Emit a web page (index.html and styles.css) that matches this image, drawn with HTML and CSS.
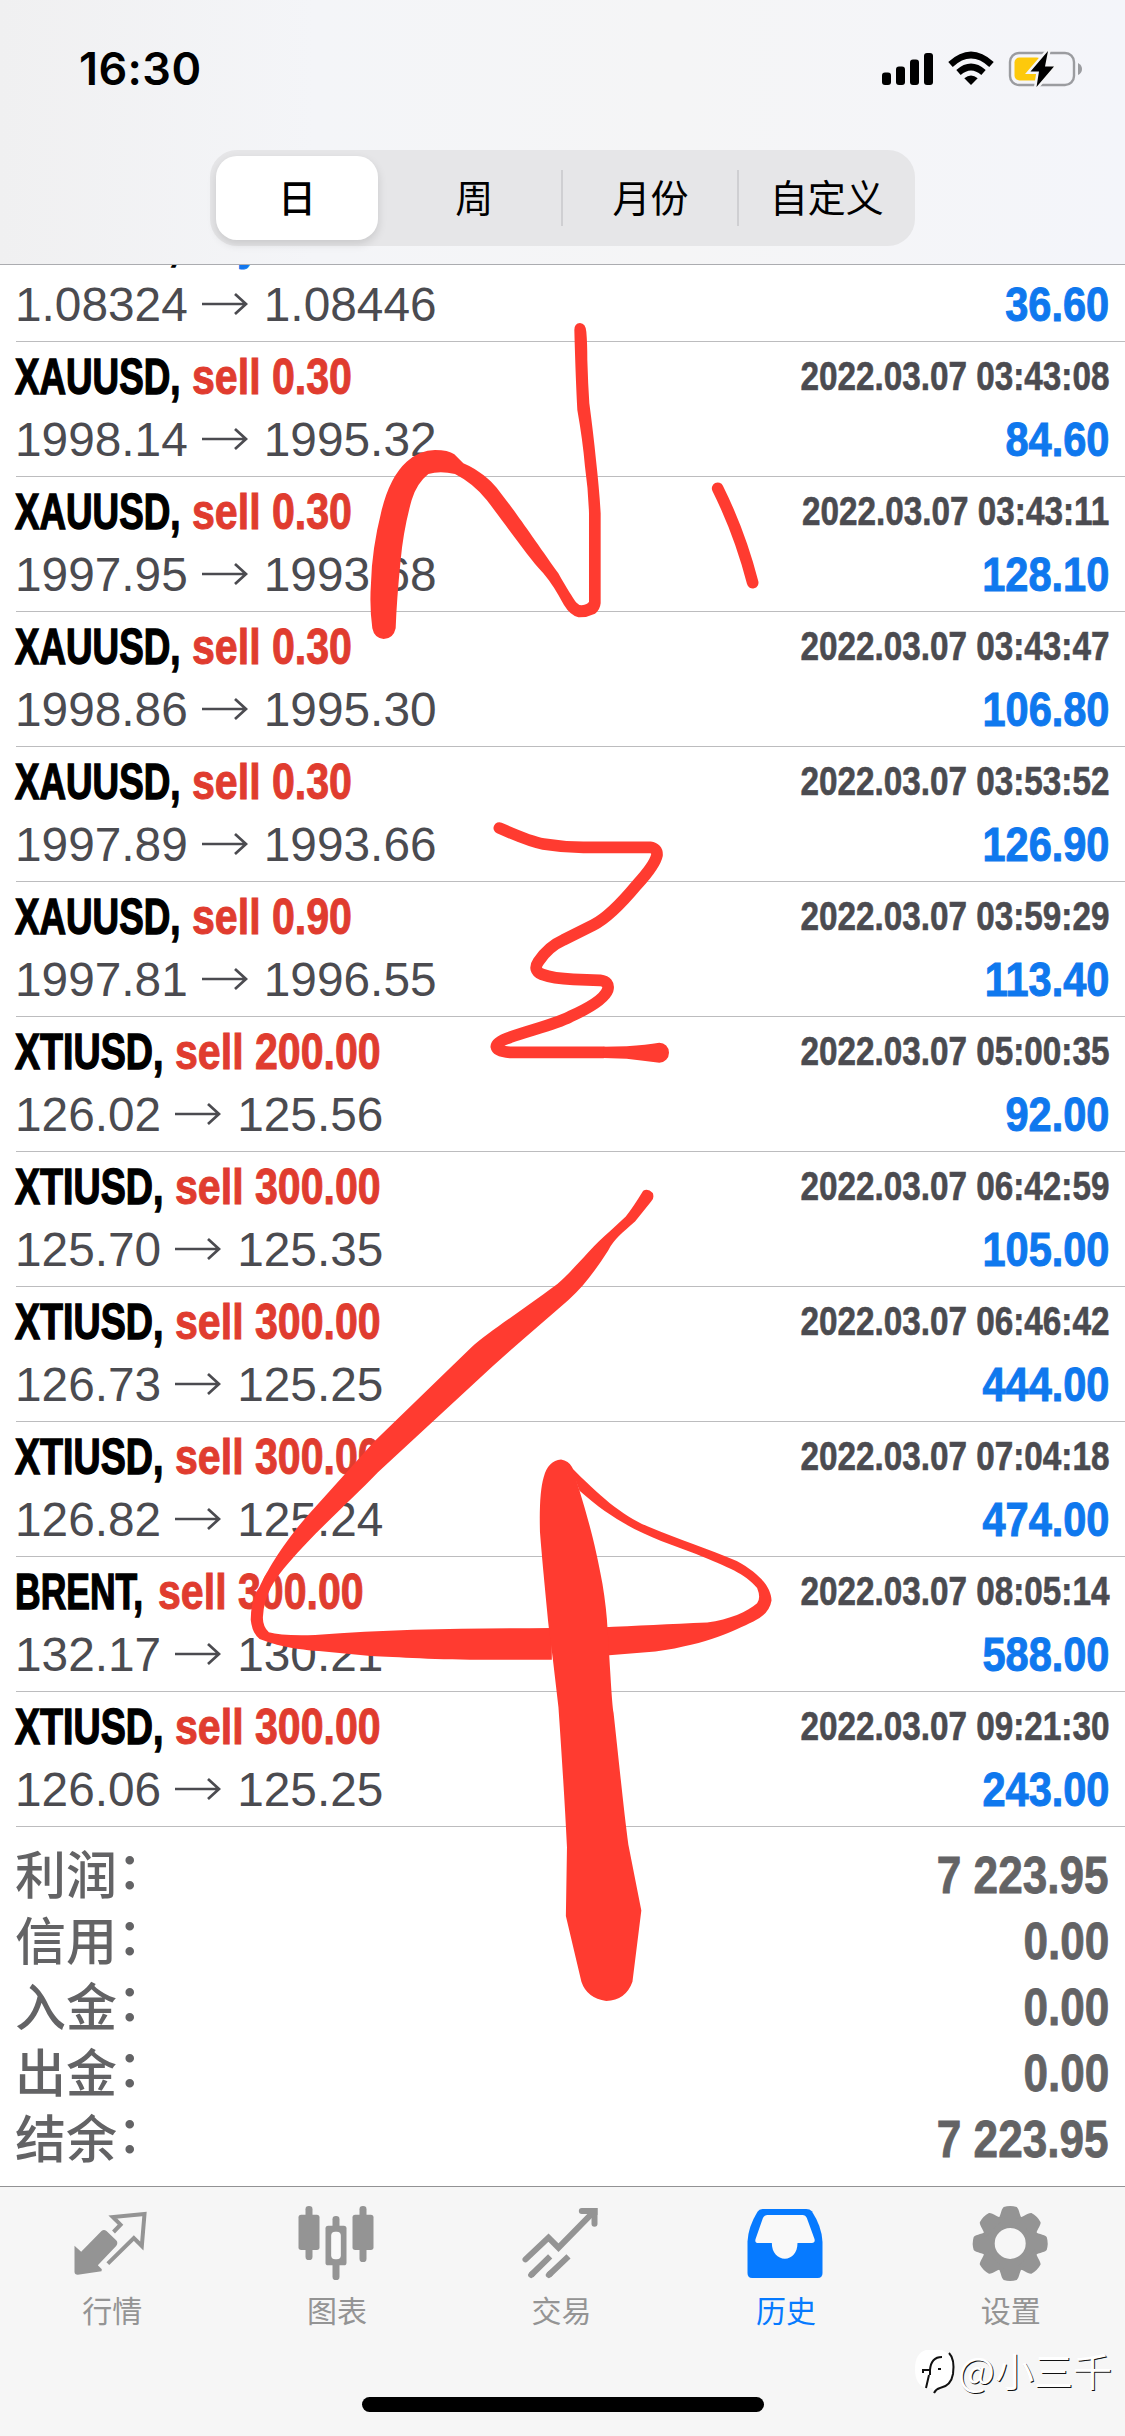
FILE: index.html
```html
<!DOCTYPE html>
<html lang="zh-CN">
<head>
<meta charset="utf-8">
<title>历史</title>
<link rel="stylesheet" href="styles.css">
</head>
<body>
<div class="screen">
  <header class="header">
    <div class="status">
      <span class="clock">16:30</span>
      <svg class="status-icons" width="204" height="40" viewBox="880 49 204 40">
        <rect x="882" y="72.5" width="9" height="12.5" rx="3"/>
        <rect x="896" y="66.5" width="9" height="18.5" rx="3"/>
        <rect x="910" y="59.5" width="9" height="25.5" rx="3"/>
        <rect x="924" y="53" width="9" height="32" rx="3"/>
        <g fill="none" stroke="#000" stroke-width="6.6">
          <path d="M950.5 64.5Q971 45.500 991.500 64.500"/>
          <path d="M958.500 72.500Q971 61.500 983.500 72.500"/>
        </g>
        <path d="M971 85L964.300 78.300Q971 72.500 977.700 78.300Z"/>
        <rect x="1010" y="53" width="64" height="32" rx="9" fill="none" stroke="#9b9ca0" stroke-width="2.400"/>
        <path d="M1078 63Q1082 65 1082 69T1078 75Z" fill="#9b9ca0"/>
        <rect x="1014.500" y="57.500" width="27" height="23" rx="5" fill="#fdc90c"/>
        <path d="M1048 51L1030.500 71.500H1039L1036.500 87L1054 66.500H1045Z" stroke="#f5f5f7" stroke-width="5"/>
        <path d="M1048 51L1030.500 71.500H1039L1036.500 87L1054 66.500H1045Z"/>
      </svg>
    </div>
    <nav class="segments">
      <span class="segment selected">日</span>
      <span class="segment">周</span>
      <span class="segment divided">月份</span>
      <span class="segment divided">自定义</span>
    </nav>
  </header>

  <main class="history">
    <div class="row">
      <div class="title"><span class="symbol eur">EURUSD,</span><span class="deal buy">buy 0.30</span></div>
      <div class="date"></div>
      <div class="prices">1.08324<svg class="arrow" viewBox="0 0 46 24"><path d="M0 12H44M33 2L44 12L33 22"/></svg>1.08446</div>
      <div class="profit">36.60</div>
    </div>
    <div class="row">
      <div class="title"><span class="symbol xau">XAUUSD,</span><span class="deal">sell 0.30</span></div>
      <div class="date">2022.03.07 03:43:08</div>
      <div class="prices">1998.14<svg class="arrow" viewBox="0 0 46 24"><path d="M0 12H44M33 2L44 12L33 22"/></svg>1995.32</div>
      <div class="profit">84.60</div>
    </div>
    <div class="row">
      <div class="title"><span class="symbol xau">XAUUSD,</span><span class="deal">sell 0.30</span></div>
      <div class="date">2022.03.07 03:43:11</div>
      <div class="prices">1997.95<svg class="arrow" viewBox="0 0 46 24"><path d="M0 12H44M33 2L44 12L33 22"/></svg>1993.68</div>
      <div class="profit">128.10</div>
    </div>
    <div class="row">
      <div class="title"><span class="symbol xau">XAUUSD,</span><span class="deal">sell 0.30</span></div>
      <div class="date">2022.03.07 03:43:47</div>
      <div class="prices">1998.86<svg class="arrow" viewBox="0 0 46 24"><path d="M0 12H44M33 2L44 12L33 22"/></svg>1995.30</div>
      <div class="profit">106.80</div>
    </div>
    <div class="row">
      <div class="title"><span class="symbol xau">XAUUSD,</span><span class="deal">sell 0.30</span></div>
      <div class="date">2022.03.07 03:53:52</div>
      <div class="prices">1997.89<svg class="arrow" viewBox="0 0 46 24"><path d="M0 12H44M33 2L44 12L33 22"/></svg>1993.66</div>
      <div class="profit">126.90</div>
    </div>
    <div class="row">
      <div class="title"><span class="symbol xau">XAUUSD,</span><span class="deal">sell 0.90</span></div>
      <div class="date">2022.03.07 03:59:29</div>
      <div class="prices">1997.81<svg class="arrow" viewBox="0 0 46 24"><path d="M0 12H44M33 2L44 12L33 22"/></svg>1996.55</div>
      <div class="profit">113.40</div>
    </div>
    <div class="row">
      <div class="title"><span class="symbol xti">XTIUSD,</span><span class="deal">sell 200.00</span></div>
      <div class="date">2022.03.07 05:00:35</div>
      <div class="prices">126.02<svg class="arrow" viewBox="0 0 46 24"><path d="M0 12H44M33 2L44 12L33 22"/></svg>125.56</div>
      <div class="profit">92.00</div>
    </div>
    <div class="row">
      <div class="title"><span class="symbol xti">XTIUSD,</span><span class="deal">sell 300.00</span></div>
      <div class="date">2022.03.07 06:42:59</div>
      <div class="prices">125.70<svg class="arrow" viewBox="0 0 46 24"><path d="M0 12H44M33 2L44 12L33 22"/></svg>125.35</div>
      <div class="profit">105.00</div>
    </div>
    <div class="row">
      <div class="title"><span class="symbol xti">XTIUSD,</span><span class="deal">sell 300.00</span></div>
      <div class="date">2022.03.07 06:46:42</div>
      <div class="prices">126.73<svg class="arrow" viewBox="0 0 46 24"><path d="M0 12H44M33 2L44 12L33 22"/></svg>125.25</div>
      <div class="profit">444.00</div>
    </div>
    <div class="row">
      <div class="title"><span class="symbol xti">XTIUSD,</span><span class="deal">sell 300.00</span></div>
      <div class="date">2022.03.07 07:04:18</div>
      <div class="prices">126.82<svg class="arrow" viewBox="0 0 46 24"><path d="M0 12H44M33 2L44 12L33 22"/></svg>125.24</div>
      <div class="profit">474.00</div>
    </div>
    <div class="row">
      <div class="title"><span class="symbol brent">BRENT,</span><span class="deal">sell 300.00</span></div>
      <div class="date">2022.03.07 08:05:14</div>
      <div class="prices">132.17<svg class="arrow" viewBox="0 0 46 24"><path d="M0 12H44M33 2L44 12L33 22"/></svg>130.21</div>
      <div class="profit">588.00</div>
    </div>
    <div class="row">
      <div class="title"><span class="symbol xti">XTIUSD,</span><span class="deal">sell 300.00</span></div>
      <div class="date">2022.03.07 09:21:30</div>
      <div class="prices">126.06<svg class="arrow" viewBox="0 0 46 24"><path d="M0 12H44M33 2L44 12L33 22"/></svg>125.25</div>
      <div class="profit">243.00</div>
    </div>

    <section class="summary">
      <div class="total"><span class="label">利润<span class="colon">：</span></span><span class="value">7 223.95</span></div>
      <div class="total"><span class="label">信用<span class="colon">：</span></span><span class="value">0.00</span></div>
      <div class="total"><span class="label">入金<span class="colon">：</span></span><span class="value">0.00</span></div>
      <div class="total"><span class="label">出金<span class="colon">：</span></span><span class="value">0.00</span></div>
      <div class="total"><span class="label">结余<span class="colon">：</span></span><span class="value">7 223.95</span></div>
    </section>
  </main>

  <footer class="footer">
    <nav class="tabs">
      <div class="tab">
        <svg width="80" height="80" viewBox="37.5 24 240 240">
          <path fill="currentColor" d="M45 152L65 170L126 108Q133 102 141 108L170 136Q177 144 170 153L115 211L127 223L126 229L55 239Q45 239 45 230Z"/>
          <path fill="none" stroke="currentColor" stroke-width="12" d="M162 111L183 89L160 66L255 57L247 153L223 129L145 206"/>
        </svg>
        <span>行情</span>
      </div>
      <div class="tab">
        <svg width="80" height="80" viewBox="712.5 24 240 240" fill="currentColor">
          <rect x="717" y="59" width="63" height="106" rx="8"/><rect x="738" y="33" width="21" height="162" rx="10"/>
          <rect x="879" y="59" width="63" height="106" rx="8"/><rect x="900" y="33" width="21" height="168" rx="10"/>
          <rect x="798" y="92" width="63" height="119" rx="8"/><rect x="819" y="63" width="21" height="192" rx="10"/>
          <rect x="815" y="110" width="29" height="83" rx="12" fill="#f9f9f9"/>
        </svg>
        <span>图表</span>
      </div>
      <div class="tab">
        <svg width="80" height="80" viewBox="37.5 24 240 240" fill="none" stroke="currentColor" stroke-width="18">
          <path stroke-linecap="round" d="M51 193L120 128L150 158L256 50"/>
          <path stroke-linecap="round" d="M220 48H258V86"/>
          <path d="M245 39H267V60H245Z" stroke="none" fill="currentColor"/>
          <path d="M68 240L125 184M121 240L180 184"/>
          <path stroke-linecap="round" d="M68 240L71 237M121 240L124 237"/>
        </svg>
        <span>交易</span>
      </div>
      <div class="tab active">
        <svg width="80" height="80" viewBox="712.5 24 240 240">
          <path fill="currentColor" d="M762 42H893Q904 42 910 49Q940 95 942 140V234Q942 249 928 249H731Q717 249 717 234V140Q719 95 747 50Q752 42 762 42Z"/>
          <path fill="#f9f9f9" d="M777 60H882Q891 60 895 69L918 132Q921 144 910 144H867C867 174 850 191 829 191S790 174 790 144H750Q738 144 741 133L763 70Q768 60 777 60Z"/>
        </svg>
        <span>历史</span>
      </div>
      <div class="tab">
        <svg width="80" height="80" viewBox="-39.200 -40.400 80 80" fill="currentColor">
          <defs><path id="tooth" d="M-13.500 -22C-9 -27 -9.500 -34 -6.500 -36.500Q0 -38.500 6.500 -36.500C9.500 -34 9 -27 13.500 -22Z"/></defs>
          <path fill-rule="evenodd" d="M0 -28.500A28.500 28.500 0 1 1 0 28.500A28.500 28.500 0 1 1 0 -28.500ZM0 -15.500A15.500 15.500 0 1 0 0 15.500A15.500 15.500 0 1 0 0 -15.500Z"/>
          <use href="#tooth"/><use href="#tooth" transform="rotate(45)"/><use href="#tooth" transform="rotate(90)"/><use href="#tooth" transform="rotate(135)"/>
          <use href="#tooth" transform="rotate(180)"/><use href="#tooth" transform="rotate(225)"/><use href="#tooth" transform="rotate(270)"/><use href="#tooth" transform="rotate(315)"/>
        </svg>
        <span>设置</span>
      </div>
    </nav>
    <div class="home-indicator"></div>
  </footer>

  <div class="watermark">
    <svg width="44" height="46" viewBox="0 0 44 46">
      <path fill="#fff" d="M12 1H28Q40 6 40 20T28 39L20 44L18 39H12Q1 36 1 20T12 1Z"/>
      <path fill="none" stroke="#111" stroke-width="2" d="M35 4Q41 10 39 25Q37 37 26 39Q22 40 20 44M28 8Q17 8 16 21H9V24M16 21V26M15 26L12 39M24 20H27"/>
    </svg><span>@小三千</span>
  </div>

  <!-- freehand marker strokes -->
  <svg class="ink" viewBox="0 0 1125 2436">
    <g transform="translate(340 300) scale(.33333)">
      <path d="M97 985Q88 920 93 850Q95 750 125 630Q150 530 200 485Q240 450 285 450Q325 450 343 463Q355 475 370 490C420 512 450 540 470 563C530 640 570 700 655 820C680 865 700 895 708 907Q716 916 725 916Q743 913 747 905V640Q745 570 735 500Q728 420 712 330Q707 240 703 90Q703 70 720 69Q737 70 739 95Q742 130 742 180Q744 250 748 310Q760 400 768 480Q778 570 782 640V910Q780 930 765 941Q740 953 715 952Q690 945 672 915C650 875 635 850 610 820C560 765 520 705 440 600Q400 550 345 522Q300 512 265 522Q230 550 215 600Q190 690 182 780Q170 900 167 985Q160 1017 131 1017Q103 1015 97 985Z"/>
      <path class="line" d="M1133 565Q1200 700 1238 848"/>
    </g>
    <g transform="translate(460 790) scale(.33333)">
      <path class="line" d="M118 114Q210 155 250 162Q310 172 370 172H570Q592 175 591 195Q585 225 530 285C480 345 440 385 400 405L310 450Q265 470 235 515Q218 540 245 553Q280 566 340 568L420 571Q450 575 443 600Q430 635 330 680C280 705 210 720 150 742Q110 755 109 770Q112 785 150 787H430"/>
      <path d="M430 770L500 769Q560 764 598 758A29 30 0 0 1 598 818Q550 812 500 806L430 804Z"/>
    </g>
    <g transform="translate(230 1170) scale(.3699 .54848)">
      <path d="M1117 38Q1130 33 1143 42Q1148 52 1138 58L1095 94C1060 115 1040 125 1022 147C990 180 960 210 915 237C850 275 780 315 710 358L400 551C330 600 230 660 160 715C120 745 92 775 89 815Q88 832 105 843Q140 850 230 848C450 836 650 836 870 835V893H700C560 893 450 888 380 886L240 877C160 873 120 865 80 855Q60 845 56 820Q57 780 80 760C100 730 150 675 210 630L390 495L650 325C700 295 760 270 885 208C940 175 970 145 1030 110L1070 85Q1090 68 1117 38Z"/>
      <path d="M920 540C1000 595 1060 630 1130 650C1220 675 1290 690 1370 713C1430 735 1463 760 1464 785Q1458 810 1415 823C1360 840 1300 863 1150 878L1000 886V834C1100 831 1190 828 1290 825C1350 820 1400 805 1425 790Q1436 780 1425 762C1390 735 1350 725 1260 700C1160 675 1060 655 945 585Z"/>
      <path d="M848 560Q860 530 895 528Q915 530 925 542L945 585C970 640 990 690 1007 755Q1018 800 1021 840C1028 910 1032 970 1037 990C1050 1070 1065 1170 1077 1230L1112 1350L1088 1480Q1070 1514 1017 1515Q965 1510 950 1480L908 1360L911 1235C905 1150 895 1050 888 980L873 893L862 835C850 750 845 720 838 660Q835 590 848 560Z"/>
    </g>
  </svg>
</div>
</body>
</html>
```
FILE: styles.css
```css
* { box-sizing: border-box; }
body { margin: 0; background: #fff; }

.screen {
  position: relative;
  display: flex;
  flex-direction: column;
  width: 1125px;
  height: 2436px;
  overflow: hidden;
  background: #fff;
  font-family: "Liberation Sans", "Noto Sans CJK SC", sans-serif;
}

.header {
  height: 265px;
  flex: none;
  border-bottom: 1px solid #abacb0;
  background: linear-gradient(90deg, #f0f0f1, #f4f5f8 28%, #f5f5f6 60%, #f4f5fa);
}
.status {
  display: flex;
  justify-content: space-between;
  align-items: center;
  height: 150px;
  padding: 0 41px 12px 79px;
}
.clock {
  font: 600 45px/60px Inter, sans-serif;
  letter-spacing: .4px;
}

.segments {
  display: grid;
  grid-template-columns: repeat(4, 1fr);
  width: 705px;
  height: 96px;
  margin-left: 210px;
  border-radius: 27px;
  background: #e6e6e8;
}
.segment {
  display: flex;
  justify-content: center;
  align-items: center;
  padding-bottom: 4px;
  font: 400 38px/52px "Noto Sans CJK SC", sans-serif;
}
.segment.selected {
  margin: 6px 8px 6px 6px;
  border-radius: 21px;
  background: #fff;
  font-weight: 500;
  box-shadow: 0 4px 10px rgba(0, 0, 0, .13);
}
.segment.divided {
  height: 56px;
  margin: 20px 0 0 -2px;
  border-left: 2px solid #cfcfd2;
}

.history {
  flex: 1;
  min-height: 0;
  overflow: hidden;
}
.row {
  display: grid;
  grid-template: 62px 65px / 1fr auto;
  height: 135px;
  margin-left: 16px;
  padding: 3px 16px 0 0;
  border-bottom: 1px solid #bcbcbe;
}
.row:first-child { margin-top: -58px; }

.title {
  display: flex;
  padding-top: 1px;
  font-size: 50px;
  font-weight: 700;
  line-height: 62px;
  white-space: nowrap;
}
.symbol, .deal { transform-origin: left; }
.symbol { margin-left: -1px; -webkit-text-stroke: 1.4px; }
.symbol.xau { width: 177px; transform: scaleX(.735); }
.symbol.eur { width: 172px; transform: scaleX(.73); }
.symbol.xti { width: 160px; transform: scaleX(.752); }
.symbol.brent { width: 143px; transform: scaleX(.71); }
.deal { color: #e03c2f; transform: scaleX(.822); -webkit-text-stroke: 1px; }
.deal.buy { color: #1277ee; }

.date, .profit, .value {
  font-weight: 700;
  text-align: right;
  transform-origin: right;
}
.date {
  padding-top: 1px;
  color: #4b4b50;
  font-size: 40px;
  line-height: 60px;
  transform: scaleX(.832);
  -webkit-text-stroke: .6px;
}
.prices {
  margin-left: -1px;
  color: #4b4b50;
  font-size: 47.8px;
  line-height: 65px;
  white-space: nowrap;
}
.arrow {
  width: 46px;
  height: 24px;
  margin: 0 16px 0 14px;
  vertical-align: 5px;
  fill: none;
  stroke: currentColor;
  stroke-width: 2.7;
}
.profit {
  color: #0f78ee;
  font-size: 48px;
  line-height: 65px;
  transform: scaleX(.865);
  -webkit-text-stroke: 1px;
}

.summary { padding: 15px 16px 0 15px; }
.total {
  display: flex;
  justify-content: space-between;
  height: 66px;
  color: #636365;
  line-height: 66px;
}
.label { font: 500 51px/60px "Noto Sans CJK SC", sans-serif; }
.colon { display: inline-block; transform: translateY(-5px); }
.value { font-size: 51px; line-height: 68px; transform: scaleX(.865); -webkit-text-stroke: .8px; }

.footer {
  height: 250px;
  flex: none;
  border-top: 1px solid #929294;
  background: #f6f6f6;
}
.tabs {
  display: grid;
  grid-template-columns: repeat(5, 1fr);
  height: 210px;
  padding: 16px 2px 0 0;
}
.tab {
  display: flex;
  flex-direction: column;
  align-items: center;
  color: #949494;
  font: 400 30px/44px "Noto Sans CJK SC", sans-serif;
}
.tab svg { margin-bottom: 4px; }
.tab.active { color: #067aff; }
.home-indicator {
  width: 402px;
  height: 15px;
  margin: 0 auto;
  border-radius: 8px;
  background: #000;
}

.watermark {
  position: absolute;
  right: 13px;
  bottom: 38px;
  display: flex;
  align-items: center;
  color: #fff;
  font: 400 39px/48px "Noto Sans CJK SC", sans-serif;
  text-shadow: 1px 1px 0 #111;
}
.watermark span { padding-bottom: 5px; }
.ink {
  position: absolute;
  inset: 0;
  width: 1125px;
  height: 2436px;
  fill: #ff3b30;
  pointer-events: none;
}
.ink .line {
  fill: none;
  stroke: #ff3b30;
  stroke-width: 35;
  stroke-linecap: round;
  stroke-linejoin: round;
}
```
